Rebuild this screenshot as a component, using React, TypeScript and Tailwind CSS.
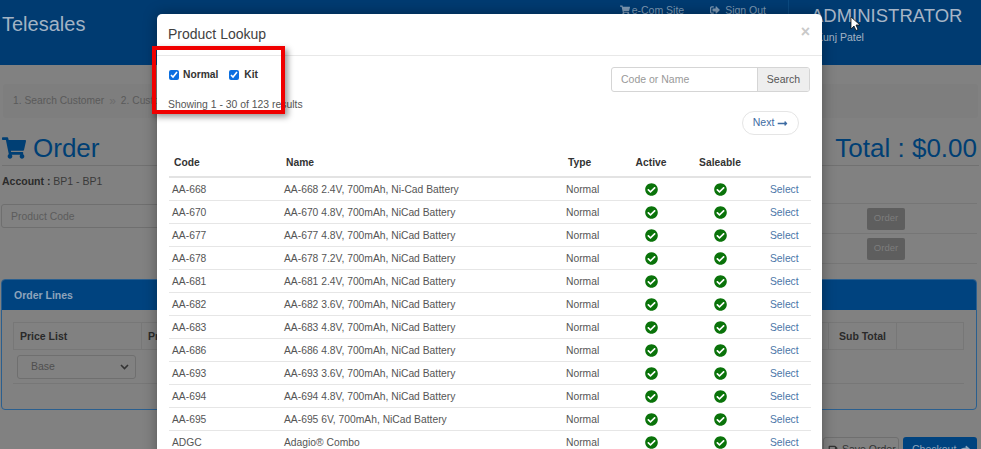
import { FaCheckCircle, FaShoppingCart, FaSignOutAlt, FaLongArrowAltRight, FaSave, FaShare } from "react-icons/fa";

const rows = [
  ["AA-668", "AA-668 2.4V, 700mAh, Ni-Cad Battery"],
  ["AA-670", "AA-670 4.8V, 700mAh, NiCad Battery"],
  ["AA-677", "AA-677 4.8V, 700mAh, NiCad Battery"],
  ["AA-678", "AA-678 7.2V, 700mAh, NiCad Battery"],
  ["AA-681", "AA-681 2.4V, 700mAh, NiCad Battery"],
  ["AA-682", "AA-682 3.6V, 700mAh, NiCad Battery"],
  ["AA-683", "AA-683 4.8V, 700mAh, NiCad Battery"],
  ["AA-686", "AA-686 4.8V, 700mAh, NiCad Battery"],
  ["AA-693", "AA-693 3.6V, 700mAh, NiCad Battery"],
  ["AA-694", "AA-694 4.8V, 700mAh, NiCad Battery"],
  ["AA-695", "AA-695 6V, 700mAh, NiCad Battery"],
  ["ADGC", "Adagio® Combo"],
];

function OrderRow({ last }: { last?: boolean }) {
  return (
    <div className={"flex h-[30px] items-center border-t border-[#767676] pl-[45px] " + (last ? "border-b h-[31px]" : "")}>
      <span className="flex h-[22px] w-[38px] items-center justify-center rounded-[2px] bg-[#5e5e5e] text-[9.5px] text-[#7d7d7d]">Order</span>
    </div>
  );
}

function Background() {
  return (
    <div className="h-full bg-[#818181]">
      <header className="flex h-[65px] bg-[#003b71] text-[#a3b3c4]">
        <div className="pl-[2px] pt-[11px] text-[20px] leading-[26px]">Telesales</div>
        <div className="ml-auto flex h-[20px] items-start gap-[26px] pr-[22px] pt-[3px] text-[10.5px] leading-[14px] text-[#7f9ab5]">
          <span className="flex items-center gap-[2px]"><FaShoppingCart size={10} />e-Com Site</span>
          <span className="flex items-center gap-[5px]"><FaSignOutAlt size={10} />Sign Out</span>
        </div>
        <div className="w-[193px] border-l border-[#0b4a80] pl-[22px] pt-[4px]">
          <div className="text-[18.5px] leading-[24px] text-[#a7b5c6]">ADMINISTRATOR</div>
          <div className="pl-[5px] pt-[2px] text-[10.5px] leading-[14px]">Kunj Patel</div>
        </div>
      </header>
      <div className="flex h-[71px] items-start px-[3px] pt-[19px]">
        <div className="flex h-[34px] w-full items-center rounded bg-[#7e7e7e] pl-[10px] text-[10.25px] text-[#5a5a5a]">
          <span>1. Search Customer</span>
          <span className="px-[5px] text-[12px] text-[#6c6c6c]">»</span>
          <span>2. Customer</span>
        </div>
      </div>
      <div className="mx-[2px] flex h-[30px] items-center justify-between border-b border-[#717171] pb-[5px] pr-[2px] text-[26px] leading-[30px] text-[#003f74]">
        <span className="flex items-center gap-[7px]"><FaShoppingCart size={24} />Order</span>
        <span>Total : $0.00</span>
      </div>
      <div className="px-[2px] pt-[8px] text-[10.5px] leading-[14px] text-[#2b2b2b]"><b>Account :</b> <span className="text-[#3a3a3a]">BP1 - BP1</span></div>
      <div className="mt-[15px] flex h-[61px] items-start justify-between pr-[4px]">
        <div className="ml-[1px] mt-[1px] flex h-[24px] w-[400px] items-center rounded-[3px] border border-[#6f6f6f] pl-[9px] pt-[2px] text-[10.4px] text-[#5c5c5c]">
          Product Code
        </div>
        <div className="w-[155px]">
          <OrderRow />
          <OrderRow last />
        </div>
      </div>
      <section className="ml-[1px] mr-[4px] mt-[15px] h-[131px] rounded-[4px] border border-[#2a5f8f]">
        <div className="flex h-[30px] items-center rounded-t-[3px] bg-[#00437f] pl-[12px] pt-[2px] text-[10.5px] font-bold text-[#8ea4bb]">Order Lines</div>
        <div className="ml-[11px] mr-[12px] mt-[12px] flex h-[62px] flex-col border-b border-[#777777]">
          <div className="flex h-[28px] shrink-0 items-center text-[10.5px] font-bold text-[#2a2a2a]">
            <span className="flex h-full w-[129px] items-center border border-[#777777] pl-[6px] pt-[1px]">Price List</span>
            <span className="flex h-full flex-1 items-center border-y border-[#777777] pl-[6px] pt-[1px]">Price</span>
            <span className="flex h-full w-[69px] items-center justify-center border border-[#777777] pt-[1px]">Sub Total</span>
            <span className="h-full w-[67px] border-y border-r border-[#777777]" />
          </div>
          <div className="flex h-[34px] items-center">
            <div className="ml-[4px] flex h-[24px] w-[119px] items-center justify-between rounded-[3px] border border-[#6f6f6f] pl-[13px] pr-[6px] text-[10.5px] text-[#4f4f4f]">
              Base
              <svg width="9" height="6" viewBox="0 0 9 6"><path d="M1 1l3.5 3.5L8 1" fill="none" stroke="#333" strokeWidth="1.6" /></svg>
            </div>
          </div>
        </div>
      </section>
      <div className="mt-[27px] flex justify-end gap-[4px] pr-[4px]">
        <span className="flex h-[24px] w-[76px] items-center gap-[4px] whitespace-nowrap rounded-t-[3px] border border-[#6f6f6f] pl-[4px] pt-[1px] text-[10.5px] text-[#333]"><FaSave size={10} />Save Order</span>
        <span className="flex h-[24px] w-[74px] items-center gap-[4px] whitespace-nowrap rounded-t-[3px] bg-[#00437f] pl-[9px] pt-[1px] text-[10.5px] text-[#8ea4bb]">Checkout<FaShare size={10} /></span>
      </div>
    </div>
  );
}

function Check() {
  return <FaCheckCircle size={13} className="mx-auto text-[#0a730a]" />;
}

function Modal() {
  return (
    <div className="absolute left-[157px] top-[14px] h-[470px] w-[665px] rounded-t-[5px] bg-white shadow-[0_0_14px_rgba(0,0,0,0.35)]">
      <div className="flex h-[42px] items-center justify-between border-b border-[#e8e8e8] pl-[11px] pr-[12px]">
        <span className="text-[14px] text-[#3f3f3f]">Product Lookup</span>
        <span className="mb-[6px] text-[16px] font-bold leading-none text-[#c9c9c9]">×</span>
      </div>
      <div className="flex justify-between pl-[11px] pr-[12px] pt-[11px]">
        <div>
          <div className="mt-[1px] flex h-[13px] items-center gap-[11px] pl-[1px] text-[10.25px] font-bold text-[#333]">
            <label className="flex items-center gap-[4px]"><input type="checkbox" readOnly checked className="m-0 h-[10px] w-[10px] accent-[#0b6fe0]" />Normal</label>
            <label className="flex items-center gap-[5px]"><input type="checkbox" readOnly checked className="m-0 h-[10px] w-[10px] accent-[#0b6fe0]" />Kit</label>
          </div>
          <div className="mt-[18px] text-[10.4px] leading-[12px] text-[#555]">Showing 1 - 30 of 123 results</div>
        </div>
        <div className="flex h-[25px] w-[199px] rounded-[3px] border border-[#d5d5d5] text-[10.5px]">
          <span className="flex flex-1 items-center pl-[9px] text-[#999]">Code or Name</span>
          <span className="flex w-[52px] items-center justify-center rounded-r-[2px] border-l border-[#d5d5d5] bg-[#eeeeee] text-[#555]">Search</span>
        </div>
      </div>
      <div className="flex justify-end pr-[23px]">
        <span className="flex h-[24px] w-[57px] items-center justify-center gap-[3px] rounded-full border border-[#e5e5e5] text-[10.5px] text-[#3e6ca3]">Next<FaLongArrowAltRight size={11} /></span>
      </div>
      <table className="ml-[12px] mt-[14px] w-[642px] table-fixed border-collapse text-[10.3px]">
        <thead>
          <tr className="h-[28px] border-b-2 border-[#e3e3e3] font-bold text-[#333]">
            <th className="w-[112px] pl-[5px] pt-[1px] text-left">Code</th>
            <th className="w-[283px] pl-[5px] pt-[1px] text-left">Name</th>
            <th className="w-[60px] pl-[4px] pt-[1px] text-left">Type</th>
            <th className="w-[54px] pt-[1px] text-center">Active</th>
            <th className="w-[84px] pt-[1px] text-center">Saleable</th>
            <th />
          </tr>
        </thead>
        <tbody className="text-[#555]">
          {rows.map(([code, name]) => (
            <tr key={code} className="h-[23px] border-b border-[#e6e6e6]">
              <td className="pl-[3px] pt-[2px]">{code}</td>
              <td className="pl-[3px] pt-[2px]">{name}</td>
              <td className="pl-[2px] pt-[2px]">Normal</td>
              <td className="pt-[2px]"><Check /></td>
              <td className="pt-[2px]"><Check /></td>
              <td className="pl-[8px] pt-[2px] text-[#4a76a8]">Select</td>
            </tr>
          ))}
        </tbody>
      </table>
    </div>
  );
}

export default function App() {
  return (
    <div className="relative h-[449px] w-[981px] overflow-hidden font-['Liberation_Sans',Arial,sans-serif]">
      <Background />
      <Modal />
      <div className="absolute left-[152px] top-[46px] h-[68px] w-[133px] border-[4px] border-[#f00000] shadow-[3px_3px_6px_rgba(0,0,0,0.4)]" />
      <svg className="absolute left-[850px] top-[16px]" width="11" height="16" viewBox="0 0 11 16">
        <path d="M1 1v12l3-3 2 4.5 2-1L6 9h4z" fill="#fff" stroke="#111" strokeWidth="0.8" />
      </svg>
    </div>
  );
}
